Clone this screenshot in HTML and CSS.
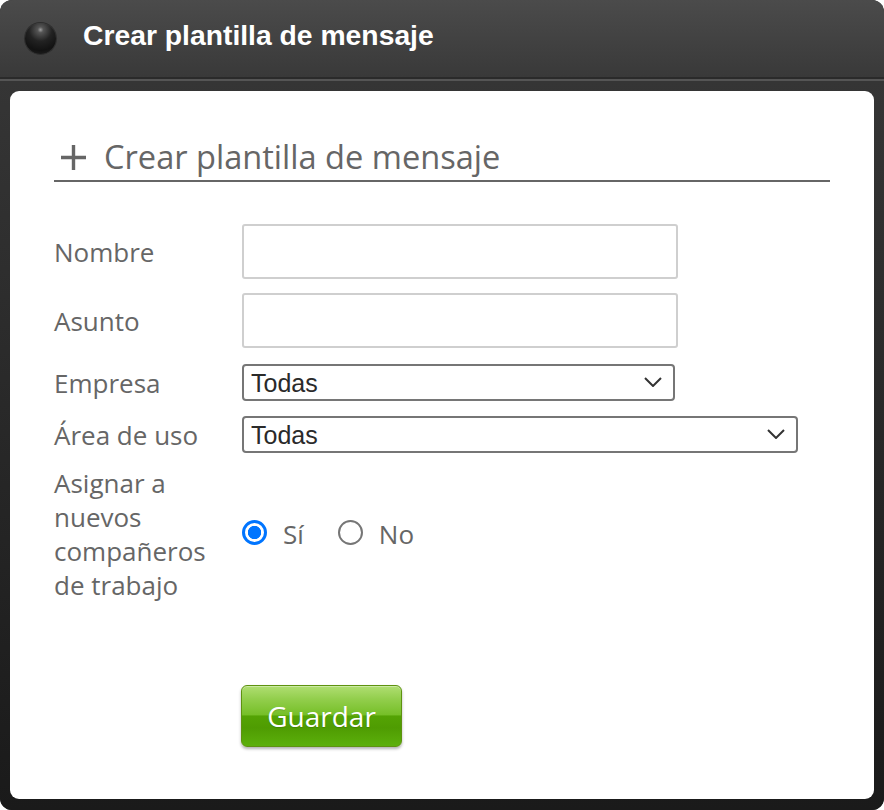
FILE: index.html
```html
<!DOCTYPE html>
<html lang="es">
<head>
<meta charset="utf-8">
<title>Crear plantilla de mensaje</title>
<link rel="stylesheet" href="styles.css">
</head>
<body>
<div class="window">
  <header class="titlebar">
    <span class="orb"></span>
    <h1 class="title">Crear plantilla de mensaje</h1>
  </header>
  <div class="frame">
    <div class="panel">
      <h2 class="heading">
        <svg class="plus" width="27" height="27" viewBox="0 0 27 27"><path d="M13.5 1v25M1 13.5h25" stroke="#666" stroke-width="3.4" fill="none"/></svg>
        <span>Crear plantilla de mensaje</span>
      </h2>
      <form class="form">
        <div class="row row-name">
          <label class="label" for="nombre">Nombre</label>
          <input class="text" id="nombre" type="text">
        </div>
        <div class="row row-subject">
          <label class="label" for="asunto">Asunto</label>
          <input class="text" id="asunto" type="text">
        </div>
        <div class="row row-company">
          <label class="label" for="empresa">Empresa</label>
          <div class="select-wrap select-short">
            <select class="select" id="empresa"><option>Todas</option></select>
            <svg class="chev" width="18" height="10" viewBox="0 0 18 10"><polyline points="1,1 9,9 17,1" fill="none" stroke="#333" stroke-width="2"/></svg>
          </div>
        </div>
        <div class="row row-area">
          <label class="label" for="area">Área de uso</label>
          <div class="select-wrap select-long">
            <select class="select" id="area"><option>Todas</option></select>
            <svg class="chev" width="18" height="10" viewBox="0 0 18 10"><polyline points="1,1 9,9 17,1" fill="none" stroke="#333" stroke-width="2"/></svg>
          </div>
        </div>
        <div class="row row-assign">
          <span class="label label-multi">Asignar a nuevos compañeros de trabajo</span>
          <div class="radios">
            <label class="option"><input class="radio" type="radio" name="asignar" checked><span>Sí</span></label>
            <label class="option"><input class="radio" type="radio" name="asignar"><span>No</span></label>
          </div>
        </div>
        <div class="actions">
          <button class="save" type="button">Guardar</button>
        </div>
      </form>
    </div>
  </div>
</div>
</body>
</html>
```
FILE: styles.css
```css
* { box-sizing: border-box; }
html, body { margin: 0; padding: 0; background: #fff; }
body { width: 884px; height: 810px; overflow: hidden; }

.window {
  width: 884px;
  height: 810px;
  border-radius: 12px;
  overflow: hidden;
  display: flex;
  flex-direction: column;
  background: #1b1b1b;
}

.titlebar {
  height: 81px;
  flex: none;
  display: flex;
  align-items: flex-start;
  padding-left: 25px;
  background: linear-gradient(#4b4b4b, #393939 77px, #2a2a2a 77px, #2a2a2a 79px, #555 79px, #555 81px);
}

.orb {
  width: 31px;
  height: 31px;
  margin-top: 23px;
  border-radius: 50%;
  flex: none;
  background: radial-gradient(circle at 50% 22%, #a0a0a0 0, #555 10%, #222 40%, #121212 72%, #262626 100%);
  box-shadow: 0 0 0 1px #2e2e2e, 0 1px 1px rgba(255,255,255,0.08);
}

.title {
  margin: 19px 0 0 27px;
  font-family: "Liberation Sans", Arial, sans-serif;
  font-weight: bold;
  font-size: 28.3px;
  line-height: 32px;
  color: #fff;
}

.frame {
  flex: 1;
  padding: 10px 10px 11px 10px;
  background: linear-gradient(#353535, #1a1a1a);
  display: flex;
}

.panel {
  flex: 1;
  background: #fff;
  border-radius: 9px;
  padding: 44px 44px 0 44px;
  font-family: "Open Sans", sans-serif;
  color: #666;
}

.heading {
  margin: 0;
  display: flex;
  align-items: center;
  font-weight: normal;
  font-size: 32.6px;
  line-height: 44px;
  padding-bottom: 1px;
  border-bottom: 2px solid #666;
  color: #666;
}

.plus {
  margin-left: 6px;
  margin-right: 17px;
  flex: none;
}

.form {
  margin-top: 42px;
}

.row {
  display: flex;
  align-items: center;
}

.label {
  width: 188px;
  flex: none;
  font-size: 26px;
  line-height: 34px;
  color: #666;
  padding-right: 18px;
}

.row-name { margin-bottom: 14px; }
.row-subject { margin-bottom: 16px; }
.row-company { margin-bottom: 15px; }
.row-area { margin-bottom: 13px; }

.text {
  width: 436px;
  height: 55px;
  border: 2px solid #cfcfcf;
  border-radius: 3px;
  font-size: 22px;
  padding: 0 10px;
  background: #fff;
}

.select-wrap {
  position: relative;
  height: 37px;
}
.select-short { width: 433px; }
.select-long { width: 556px; }

.select {
  appearance: none;
  -webkit-appearance: none;
  width: 100%;
  height: 37px;
  border: 2px solid #767676;
  border-radius: 4px;
  background: #fff;
  font-family: "Liberation Sans", Arial, sans-serif;
  font-size: 25px;
  color: #2a2a2a;
  padding: 0 40px 0 7px;
  margin: 0;
}

.chev {
  position: absolute;
  right: 13px;
  top: 13px;
  pointer-events: none;
}

.radios {
  display: flex;
  align-items: center;
}

.option {
  display: flex;
  align-items: center;
  font-size: 26px;
  line-height: 34px;
  color: #666;
}
.option + .option { margin-left: 34px; }

.radio {
  appearance: none;
  -webkit-appearance: none;
  width: 25px;
  height: 25px;
  margin: 0 16px 4px 0;
  border: 2px solid #767676;
  border-radius: 50%;
  background: #fff;
  flex: none;
}
.radio:checked {
  border: 3px solid #0075ff;
  background: radial-gradient(circle, #0075ff 0, #0075ff 6.3px, #fff 7px);
}

.actions {
  margin-top: 83px;
  padding-left: 187px;
}

.save {
  width: 161px;
  height: 62px;
  border: 1px solid #5e9210;
  border-radius: 6px;
  background: linear-gradient(#b0de72 0%, #92ce4c 22%, #76bf28 48%, #54a304 50%, #4f9c02 70%, #5cb00b 100%);
  box-shadow: 0 2px 3px rgba(0,0,0,0.3), inset 0 1px 0 rgba(255,255,255,0.35);
  font-family: "Open Sans", sans-serif;
  font-size: 28px;
  color: #fff;
  text-shadow: 0 1px 1px rgba(0,0,0,0.15);
  padding: 0;
  cursor: pointer;
}
```
